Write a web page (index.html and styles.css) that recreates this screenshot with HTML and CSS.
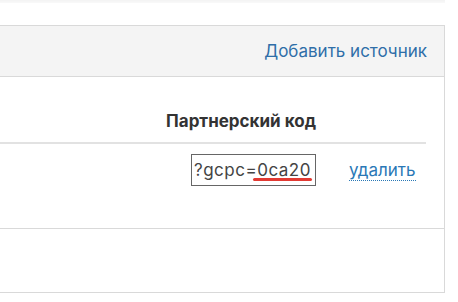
FILE: index.html
```html
<!DOCTYPE html>
<html>
	<head>
		<meta charset="utf-8" />
		<link rel="stylesheet" href="styles.css">
	</head>
	<body>
		<div class="prev-panel"></div>
		<div class="panel">
			<div class="panel-head">
				<a class="add-link" href="#">Добавить источник</a>
			</div>
			<div class="panel-body">
				<div class="cols-head">
					<span class="col-title">Партнерский код</span>
				</div>
				<div class="source-row">
					<div class="code-box">?gcpc=<span class="code-mark">0ca20</span></div>
					<div class="action-cell">
						<a class="remove-link" href="#">удалить</a>
					</div>
				</div>
			</div>
			<div class="panel-foot"></div>
		</div>
	</body>
</html>
```

FILE: styles.css
```css
body {
	margin: 0;
	background: #fff;
	font-family: 'Inter', 'Liberation Sans', sans-serif;
	color: #333;
}
div.prev-panel {
	width: 445px;
	height: 3px;
	background: linear-gradient(#f3f3f3, #f9f9f9);
}
div.panel {
	margin-top: 22px;
	width: 444px;
	border: 1px solid #d9d9d9;
	border-left: none;
}
div.panel-head {
	display: flex;
	align-items: center;
	justify-content: flex-end;
	height: 50px;
	padding-right: 17px;
	background-color: #f4f4f4;
	border-bottom: 1px solid #d9d9d9;
}
a.add-link {
	color: #2f6ea8;
	font-size: 17px;
	text-decoration: none;
}
div.panel-body {
	height: 119px;
	padding-top: 32px;
	border-bottom: 1px solid #d9d9d9;
}
div.cols-head {
	display: flex;
	justify-content: flex-end;
	width: 316px;
	padding-left: 0;
	padding-right: 110px;
	padding-bottom: 9px;
	line-height: 24px;
	border-bottom: 2px solid #e2e2e2;
}
span.col-title {
	font-size: 17px;
	font-weight: 700;
	color: #333;
}
div.source-row {
	display: flex;
	align-items: center;
	justify-content: flex-end;
	width: 426px;
	margin-top: 10px;
}
div.code-box {
	width: 121px;
	height: 30px;
	padding-left: 2px;
	border: 1px solid #666;
	font-size: 17px;
	letter-spacing: 0.5px;
	line-height: 30px;
	color: #444;
	white-space: nowrap;
}
span.code-mark {
	position: relative;
}
span.code-mark::after {
	content: "";
	position: absolute;
	left: -4px;
	right: -1px;
	bottom: -1px;
	height: 3px;
	border-radius: 2px;
	background-color: #e23a33;
}
div.action-cell {
	width: 77px;
	margin-left: 33px;
}
a.remove-link {
	color: #2a78b6;
	font-size: 17px;
	text-decoration: none;
	border-bottom: 1px dotted #2a78b6;
}
div.panel-foot {
	height: 63px;
}
```
